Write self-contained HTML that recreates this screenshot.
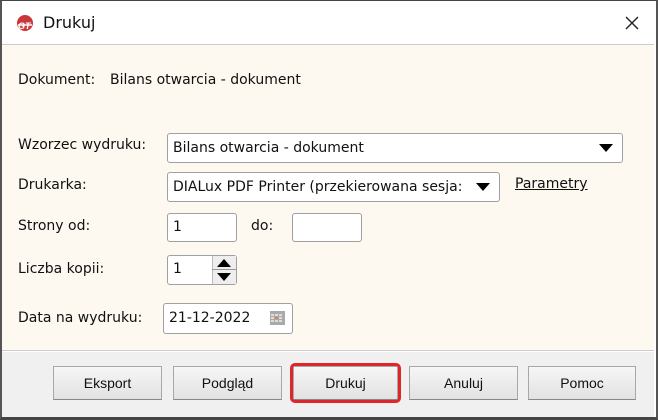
<!DOCTYPE html>
<html><head><meta charset="utf-8"><style>
*{box-sizing:border-box;margin:0;padding:0}
body{width:658px;height:420px;overflow:hidden;background:#fff;font-family:"DejaVu Sans","Liberation Sans",sans-serif;font-size:13px;color:#111;position:relative}
.frame{position:absolute;left:0;top:0;width:658px;height:420px;border:2px solid #555;border-top:1px solid #444;border-bottom:3px solid #444}
.title{position:absolute;left:2px;top:1px;width:652px;height:44px;background:#fff;border-bottom:1px solid #ccc}
.content{position:absolute;left:2px;top:45px;width:652px;height:306px;background:#fdf8f0;border-bottom:1px solid #ccc}
.bottom{position:absolute;left:2px;top:352px;width:652px;height:65px;background:#f0f0f0}
.a{position:absolute;white-space:nowrap}
.box{position:absolute;background:#fff;border:1px solid #a0a0a0;border-radius:3px;padding-left:5px;font-size:14px;line-height:26px}
.tri{position:absolute;width:0;height:0;border-left:7px solid transparent;border-right:7px solid transparent;border-top:8px solid #000}
.btn{position:absolute;top:366px;height:34px;width:109px;background:linear-gradient(#f6f6f6,#e2e2e2);border:1px solid #a8a8a8;border-bottom-color:#888;font-size:14px;text-align:center;line-height:32px;font-family:"Liberation Sans",sans-serif}
.lbl{font-size:14px}
</style></head><body>
<div class="title"></div>
<div class="content"></div>
<div class="bottom"></div>
<div class="frame"></div>
<svg class="a" style="left:15px;top:14px" width="20" height="18" viewBox="0 0 20 18"><circle cx="10" cy="9" r="8" fill="#c8373a"/><path d="M3 11h14" stroke="#fff" stroke-width="1.5"/><text x="3" y="15" font-size="9" font-weight="bold" fill="#fff" font-family="Liberation Sans" font-style="italic">GT</text></svg>
<div class="a" style="left:43px;top:13px;font-size:16px">Drukuj</div>
<svg class="a" style="left:624px;top:15px" width="16" height="16"><path d="M2 2L14 14M14 2L2 14" stroke="#222" stroke-width="1.4"/></svg>
<div class="a lbl" style="left:18px;top:72px">Dokument:</div>
<div class="a lbl" style="left:110px;top:72px">Bilans otwarcia - dokument</div>
<div class="a lbl" style="left:18px;top:137px">Wzorzec wydruku:</div>
<div class="a lbl" style="left:18px;top:177px">Drukarka:</div>
<div class="a lbl" style="left:18px;top:218px">Strony od:</div>
<div class="a lbl" style="left:18px;top:261px">Liczba kopii:</div>
<div class="a lbl" style="left:18px;top:310px">Data na wydruku:</div>
<div class="box" style="left:167px;top:133px;width:456px;height:30px;line-height:28px">Bilans otwarcia - dokument</div>
<div class="tri" style="left:599px;top:144px"></div>
<div class="box" style="left:167px;top:172px;width:333px;height:30px;line-height:28px">DIALux PDF Printer (przekierowana sesja:</div>
<div class="tri" style="left:476px;top:183px"></div>
<div class="a lbl" style="left:515px;top:176px;text-decoration:underline">Parametry</div>
<div class="box" style="left:167px;top:213px;width:70px;height:29px">1</div>
<div class="a lbl" style="left:251px;top:218px">do:</div>
<div class="box" style="left:292px;top:213px;width:70px;height:29px"></div>
<div class="box" style="left:167px;top:255px;width:70px;height:30px">1</div>
<div class="a" style="left:212px;top:256px;width:24px;height:28px;background:#eee;border-left:1px solid #bbb"></div>
<div class="a" style="left:212px;top:269px;width:24px;height:1px;background:#999"></div>
<div class="a" style="left:217px;top:259px;width:0;height:0;border-left:7px solid transparent;border-right:7px solid transparent;border-bottom:8px solid #000"></div>
<div class="a" style="left:217px;top:273px;width:0;height:0;border-left:7px solid transparent;border-right:7px solid transparent;border-top:8px solid #000"></div>
<div class="box" style="left:163px;top:303px;width:130px;height:31px;line-height:29px">21-12-2022</div>
<svg class="a" style="left:270px;top:311px" width="15" height="14"><rect x="0" y="0" width="15" height="14" fill="#aaa"/><g fill="#ddd"><rect x="1" y="3" width="3" height="2"/><rect x="5" y="3" width="3" height="2"/><rect x="9" y="3" width="3" height="2"/><rect x="1" y="6" width="3" height="2"/><rect x="5" y="6" width="3" height="2" fill="#e08050"/><rect x="9" y="6" width="3" height="2"/><rect x="1" y="9" width="3" height="2"/><rect x="5" y="9" width="3" height="2"/><rect x="9" y="9" width="3" height="2"/></g></svg>
<div class="btn" style="left:53px">Eksport</div>
<div class="btn" style="left:173px">Podgląd</div>
<div class="btn" style="left:293px;width:105px">Drukuj</div>
<div class="a" style="left:290px;top:363px;width:111px;height:40px;border:3px solid #e0262a;border-radius:5px"></div>
<div class="btn" style="left:409px">Anuluj</div>
<div class="btn" style="left:528px;width:108px">Pomoc</div>
</body></html>
